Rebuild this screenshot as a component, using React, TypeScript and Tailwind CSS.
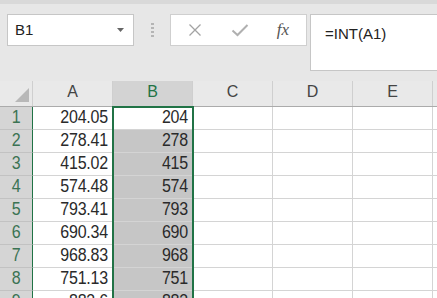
import React from "react";

const aVals = ["204.05", "278.41", "415.02", "574.48", "793.41", "690.34", "968.83", "751.13", "883.6"];
const bVals = ["204", "278", "415", "574", "793", "690", "968", "751", "883"];

function XIcon() {
  return (
    <svg width="14" height="14" viewBox="0 0 14 14" fill="none">
      <path d="M1.5 1.5 L12.5 12.5 M12.5 1.5 L1.5 12.5" stroke="#a3a3a3" strokeWidth="1.3" />
    </svg>
  );
}

function CheckIcon() {
  return (
    <svg width="18" height="14" viewBox="0 0 18 14" fill="none">
      <path d="M1.5 7.5 L6.5 12 L16.5 2" stroke="#b0b0b0" strokeWidth="2" />
    </svg>
  );
}

function Num({ v }: { v: string }) {
  return <span className="inline-block origin-bottom scale-y-[1.13] tracking-[-0.2px]">{v}</span>;
}

export default function App() {
  const rows = Array.from({ length: 9 }, (_, i) => i);
  return (
    <div
      className="relative w-[437px] h-[298px] overflow-hidden bg-[#e7e7e7]"
      style={{ fontFamily: '"Liberation Sans", Arial, sans-serif' }}
    >
      <div className="h-[4px] bg-[#d9d9d9]" />
      {/* toolbar */}
      <div className="flex items-start pt-[10px] h-[77px]">
        <div className="ml-[7px] w-[127px] h-[32px] bg-white border border-[#c6c6c6] flex items-center justify-between pl-[7px] pr-[9px]">
          <span className="text-[15px] text-[#222]">B1</span>
          <svg width="7" height="4" viewBox="0 0 7 4">
            <path d="M0 0 L7 0 L3.5 4 Z" fill="#666" />
          </svg>
        </div>
        <div className="w-[36px] h-[32px] flex flex-col items-center justify-center gap-[2px]">
          <div className="w-[3px] h-[2px] bg-[#b5b5b5]" />
          <div className="w-[3px] h-[2px] bg-[#b5b5b5]" />
          <div className="w-[3px] h-[2px] bg-[#b5b5b5]" />
          <div className="w-[3px] h-[2px] bg-[#b5b5b5]" />
        </div>
        <div className="w-[137px] h-[32px] bg-white border border-[#cfcfcf] flex items-center">
          <div className="w-[46px] flex justify-center pl-[2px]">
            <XIcon />
          </div>
          <div className="w-[46px] flex justify-center">
            <CheckIcon />
          </div>
          <div className="w-[40px] flex justify-center">
            <span
              className="italic text-[17px] text-[#555]"
              style={{ fontFamily: '"Liberation Serif", "Times New Roman", serif' }}
            >
              fx
            </span>
          </div>
        </div>
        <div className="ml-[3px] flex-1 h-[57px] bg-white border-l border-b border-t border-[#c6c6c6] pl-[14px] pt-[7px]">
          <span className="text-[15px] text-[#222]">=INT(A1)</span>
        </div>
      </div>

      {/* column headers */}
      <div className="flex h-[26px] bg-[#e9e9e9] border-b border-[#ababab]">
        <div className="w-[33px] shrink-0 relative border-r border-[#cfcfcf]">
          <svg className="absolute right-[3px] bottom-[4px]" width="14" height="14" viewBox="0 0 14 14">
            <path d="M14 0 L14 14 L0 14 Z" fill="#b8b8b8" />
          </svg>
        </div>
        {["A", "B", "C", "D", "E", ""].map((c) => (
          <div
            key={c || "F"}
            className={
              "w-[80px] shrink-0 flex items-end justify-center pb-[2px] text-[16px] border-r border-[#cfcfcf] " +
              (c === "B" ? "bg-[#d3d3d3] text-[#217346]" : "text-[#444]")
            }
          >
            {c}
          </div>
        ))}
      </div>

      {/* rows */}
      {rows.map((r) => (
        <div key={r} className="flex h-[23px]">
          <div className="w-[33px] shrink-0 bg-[#d5d5d5] border-r border-[#217346] border-b border-b-[#c2c2c2] flex items-end justify-center text-[16px] text-[#3b7353] leading-none pb-[3px]">
            <Num v={String(r + 1)} />
          </div>
          <div className="w-[80px] shrink-0 bg-white border-r border-b border-[#d4d4d4] flex items-end justify-end pr-[4px] text-[16px] text-[#2a2a2a] leading-none pb-[3px]">
            <Num v={aVals[r]} />
          </div>
          <div
            className={
              "w-[80px] shrink-0 border-r border-b border-[#d4d4d4] flex items-end justify-end pr-[4px] text-[16px] text-[#2a2a2a] leading-none pb-[3px] " +
              (r === 0 ? "bg-white" : "bg-[#c6c6c6]")
            }
          >
            <Num v={bVals[r]} />
          </div>
          {[0, 1, 2, 3].map((k) => (
            <div key={k} className="w-[80px] shrink-0 bg-white border-r border-b border-[#d4d4d4]" />
          ))}
        </div>
      ))}

      {/* selection outline */}
      <div className="absolute left-[112px] top-[106px] w-[82px] h-[200px] border-2 border-[#217346] pointer-events-none" />
    </div>
  );
}
